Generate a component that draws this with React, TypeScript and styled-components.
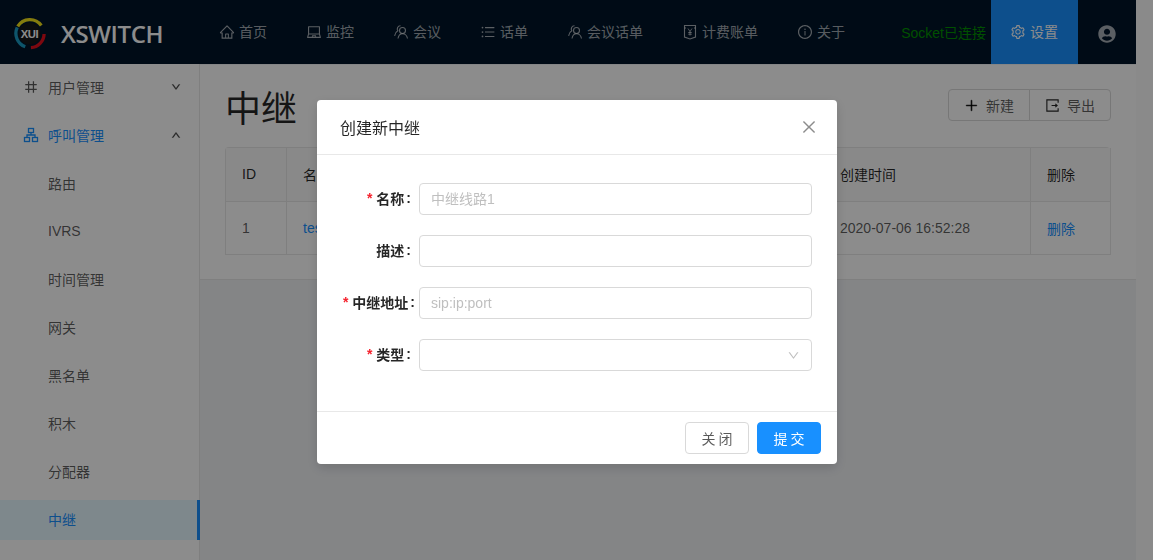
import React from "react";
import styled, { createGlobalStyle } from "styled-components";
import {
  AiOutlineClose,
  AiOutlineDown,
  AiOutlineHome,
  AiOutlineInfoCircle,
  AiOutlineLaptop,
  AiOutlineNumber,
  AiOutlinePlus,
  AiOutlineSetting,
  AiOutlineUnorderedList,
  AiOutlineUp,
} from "react-icons/ai";
import { FaUserCircle } from "react-icons/fa";

const GlobalStyle = createGlobalStyle`
  html, body {
    margin: 0;
    height: 100%;
    overflow: hidden;
    font-family: "Liberation Sans", "Noto Sans CJK SC", sans-serif;
    font-size: 14px;
    color: rgba(0, 0, 0, 0.65);
  }
  * { box-sizing: border-box; }
`;

const Shell = styled.div`
  display: flex;
  height: 560px;
`;

const Page = styled.div`
  width: 1136px;
  display: flex;
  flex-direction: column;
`;

const ScrollTrack = styled.div`
  flex: 1;
  background: #fbfbfb;
`;

const Header = styled.header`
  height: 64px;
  flex-shrink: 0;
  display: flex;
  align-items: stretch;
  background: #001529;
`;

const Brand = styled.div`
  width: 200px;
  display: flex;
  align-items: center;
  padding: 2px 0 0 13px;
  gap: 15px;
  color: #fff;
  font-family: "Open Sans", sans-serif;
  font-size: 24px;
  font-weight: 600;
  letter-spacing: -0.4px;
`;

const NavItem = styled.div`
  display: flex;
  align-items: center;
  gap: 5px;
  padding: 0 20px;
  white-space: nowrap;
  color: rgba(255, 255, 255, 0.65);
  line-height: 1;
  svg { font-size: 16px; margin: -1px -1px 0; }
`;

const SocketStatus = styled.div`
  margin-left: auto;
  margin-right: 5px;
  display: flex;
  align-items: center;
  color: #009000;
`;

const SettingsItem = styled(NavItem)`
  width: 87px;
  background: #1890ff;
  color: #fff;
`;

const Avatar = styled.div`
  width: 58px;
  display: flex;
  align-items: center;
  padding: 3px 0 0 20px;
  color: rgba(255, 255, 255, 0.65);
  font-size: 18px;
`;

const Body = styled.div`
  flex: 1;
  display: flex;
  min-height: 0;
`;

const Sidebar = styled.aside`
  width: 200px;
  flex-shrink: 0;
  padding-top: 4px;
  background: #fff;
  border-right: 1px solid #e8e8e8;
`;

const MenuItem = styled.div<{ $active?: boolean; $open?: boolean }>`
  height: 40px;
  margin-bottom: 8px;
  margin-right: -1px;
  padding: 0 19px 3px ${(p) => (p.$open ? "24px" : "48px")};
  display: flex;
  align-items: center;
  color: ${(p) => (p.$active ? "#1890ff" : "rgba(0, 0, 0, 0.65)")};
  background: ${(p) => (p.$active ? "#e6f7ff" : "transparent")};
  border-right: ${(p) => (p.$active ? "3px solid #1890ff" : "0")};
`;

const SubmenuRow = styled(MenuItem)<{ $blue?: boolean }>`
  color: ${(p) => (p.$blue ? "#1890ff" : "rgba(0, 0, 0, 0.65)")};
  gap: 9px;
  > svg:first-child { font-size: 16px; margin-left: -1px; }
`;

const Caret = styled.span`
  margin-left: auto;
  display: flex;
  font-size: 10px;
  color: rgba(0, 0, 0, 0.65);
  svg { stroke: currentColor; stroke-width: 60; }
`;

const Content = styled.main`
  flex: 1;
  background: #f0f2f5;
`;

const Card = styled.section`
  margin-top: 1px;
  height: 215px;
  padding: 15px 25px 0;
  background: #fff;
  border-bottom: 1px solid #e8e8e8;
`;

const TitleRow = styled.div`
  display: flex;
  justify-content: space-between;
  align-items: flex-start;
  height: 67px;
`;

const Title = styled.h1`
  margin: 0;
  font-size: 36px;
  font-weight: 400;
  line-height: 60px;
  color: rgba(0, 0, 0, 0.85);
`;

const ButtonGroup = styled.div`
  display: flex;
  margin-top: 9px;
`;

const GroupButton = styled.button`
  height: 32px;
  width: 82px;
  display: flex;
  align-items: center;
  justify-content: center;
  gap: 7px;
  font: inherit;
  color: rgba(0, 0, 0, 0.65);
  background: #fff;
  border: 1px solid #d9d9d9;
  padding: 0;
  &:first-child { border-radius: 4px 0 0 4px; }
  &:last-child { border-radius: 0 4px 4px 0; margin-left: -1px; }
  svg { font-size: 15px; color: rgba(0, 0, 0, 0.85); stroke: currentColor; stroke-width: 30; }
`;

const Table = styled.div`
  display: grid;
  grid-template-columns: 61px 537px 207px 80px;
  width: 885px;
  border-top: 1px solid #e8e8e8;
  border-left: 1px solid #e8e8e8;
  border-radius: 4px 4px 0 0;
`;

const Cell = styled.div<{ $head?: boolean; $link?: boolean }>`
  height: 53.5px;
  padding: 0 16px ${(p) => (p.$head ? "1px" : "0")};
  display: flex;
  align-items: center;
  border-right: 1px solid #e8e8e8;
  border-bottom: 1px solid #e8e8e8;
  background: ${(p) => (p.$head ? "#fafafa" : "#fff")};
  color: ${(p) =>
    p.$link ? "#1890ff" : p.$head ? "rgba(0, 0, 0, 0.85)" : "rgba(0, 0, 0, 0.65)"};
`;

const Mask = styled.div`
  position: fixed;
  inset: 0;
  background: rgba(0, 0, 0, 0.45);
`;

const Modal = styled.div`
  position: fixed;
  left: 317px;
  top: 100px;
  width: 520px;
  height: 364px;
  display: flex;
  flex-direction: column;
  background: #fff;
  border-radius: 4px;
  box-shadow: 0 4px 12px rgba(0, 0, 0, 0.15);
`;

const ModalHead = styled.div`
  height: 55px;
  flex-shrink: 0;
  padding: 0 19px 1px 23px;
  display: flex;
  align-items: center;
  justify-content: space-between;
  border-bottom: 1px solid #e8e8e8;
  font-size: 16px;
  color: rgba(0, 0, 0, 0.85);
  svg { font-size: 18px; color: rgba(0, 0, 0, 0.45); }
`;

const ModalForm = styled.div`
  flex: 1;
  padding: 28px 25px 0 24px;
  display: flex;
  flex-direction: column;
  gap: 20px;
`;

const FormRow = styled.div`
  display: flex;
  align-items: center;
  height: 32px;
`;

const Label = styled.label<{ $wide?: boolean }>`
  width: 78px;
  flex-shrink: 0;
  padding: 0 ${(p) => (p.$wide ? "4px" : "8px")} 3px 0;
  display: flex;
  justify-content: flex-end;
  align-items: center;
  white-space: nowrap;
  font-size: 14px;
  font-weight: 700;
  color: rgba(0, 0, 0, 0.85);
`;

const Colon = styled.span`
  margin-left: 2px;
`;

const Star = styled.span`
  margin-right: 4px;
  color: #f5222d;
  font-size: 14px;
  font-weight: 700;
`;

const Input = styled.input`
  flex: 1;
  min-width: 0;
  height: 32px;
  padding: 0 11px;
  font: inherit;
  color: rgba(0, 0, 0, 0.65);
  border: 1px solid #d9d9d9;
  border-radius: 4px;
  outline: none;
  &::placeholder { color: #bfbfbf; opacity: 1; }
`;

const SelectBox = styled.div`
  flex: 1;
  height: 32px;
  padding: 0 11px;
  display: flex;
  align-items: center;
  justify-content: flex-end;
  border: 1px solid #d9d9d9;
  border-radius: 4px;
  font-size: 13px;
  color: #bfbfbf;
`;

const ModalFoot = styled.div`
  height: 53px;
  flex-shrink: 0;
  padding: 0 16px;
  display: flex;
  align-items: center;
  justify-content: flex-end;
  gap: 8px;
  border-top: 1px solid #e8e8e8;
`;

const FootButton = styled.button<{ $primary?: boolean }>`
  width: 64px;
  height: 32px;
  padding: 0;
  font: inherit;
  letter-spacing: 3px;
  text-indent: 3px;
  border-radius: 4px;
  border: 1px solid ${(p) => (p.$primary ? "#1890ff" : "#d9d9d9")};
  background: ${(p) => (p.$primary ? "#1890ff" : "#fff")};
  color: ${(p) => (p.$primary ? "#fff" : "rgba(0, 0, 0, 0.65)")};
`;

const Logo = () => (
  <svg width="33" height="33" viewBox="0 0 35 35">
    <circle cx="17.5" cy="17.5" r="11.5" fill="#14161a" />
    <path d="M5 10 A15 15 0 0 1 30 9" fill="none" stroke="#f2e21a" strokeWidth="3.5" />
    <path d="M33 18 A15 15 0 0 1 19 32.5" fill="none" stroke="#e3101d" strokeWidth="3.5" />
    <path d="M4.5 11 A15 15 0 0 0 13 31.5" fill="none" stroke="#1b9cc4" strokeWidth="3.5" />
    <text x="17.5" y="22" textAnchor="middle" fontSize="12" fontWeight="700" fill="#fff" fontFamily="Liberation Sans, sans-serif">
      XUI
    </text>
  </svg>
);

// the two overlapping heads of 会议 / 会议话单
const PeopleIcon = () => (
  <svg width="1em" height="1em" viewBox="0 0 16 16" fill="none" stroke="currentColor" strokeWidth="1.1">
    <circle cx="9.5" cy="6.5" r="3" />
    <path d="M5 14.5 C5.5 11.5 7.5 9.8 9.5 9.8 C11.5 9.8 14 11.5 14.5 14.5" />
    <path d="M7.5 1.8 A3.2 3.2 0 0 0 4.8 6.8 C3 7.8 2 9.5 1.6 11.8" />
  </svg>
);

// the ¥ ledger with the notched foot of 计费账单
const LedgerIcon = () => (
  <svg width="1em" height="1em" viewBox="0 0 16 16" fill="none" stroke="currentColor" strokeWidth="1.1">
    <path d="M2.5 1.5 H13.5 V13 L8 15 L2.5 13 Z" />
    <path d="M2.5 4 H4 M12 4 H13.5" />
    <path d="M6 4.5 L8 7.5 L10 4.5 M8 7.5 V11.5 M6.2 8.5 H9.8 M6.2 10.2 H9.8" strokeWidth="0.9" />
  </svg>
);

// box open at the right with a small arrow, 导出
const ExportIcon = () => (
  <svg width="1em" height="1em" viewBox="0 0 16 16" fill="none" stroke="currentColor">
    <path d="M14 5 V2 H2 V14 H14 V11" strokeWidth="1.2" />
    <path d="M7 8 H13 M11 6.2 L13 8 L11 9.8" strokeWidth="1.1" />
  </svg>
);

// org chart of 呼叫管理
const ClusterIcon = () => (
  <svg width="1em" height="1em" viewBox="0 0 16 16" fill="none" stroke="currentColor" strokeWidth="1.3">
    <rect x="5.5" y="1.5" width="5" height="4" />
    <rect x="1.5" y="10.5" width="5" height="4" />
    <rect x="9.5" y="10.5" width="5" height="4" />
    <path d="M8 5.5 V8 M4 10.5 V8 H12 V10.5" />
  </svg>
);

const navItems = [
  { icon: <AiOutlineHome />, label: "首页" },
  { icon: <AiOutlineLaptop />, label: "监控" },
  { icon: <PeopleIcon />, label: "会议" },
  { icon: <AiOutlineUnorderedList />, label: "话单" },
  { icon: <PeopleIcon />, label: "会议话单" },
  { icon: <LedgerIcon />, label: "计费账单" },
  { icon: <AiOutlineInfoCircle />, label: "关于" },
];

const subItems = ["路由", "IVRS", "时间管理", "网关", "黑名单", "积木", "分配器"];

export default function App() {
  return (
    <>
      <GlobalStyle />
      <Shell>
        <Page>
          <Header>
            <Brand>
              <Logo />
              XSWITCH
            </Brand>
            {navItems.map((item) => (
              <NavItem key={item.label}>
                {item.icon}
                {item.label}
              </NavItem>
            ))}
            <SocketStatus>Socket已连接</SocketStatus>
            <SettingsItem>
              <AiOutlineSetting />
              设置
            </SettingsItem>
            <Avatar>
              <FaUserCircle />
            </Avatar>
          </Header>
          <Body>
            <Sidebar>
              <SubmenuRow $open>
                <AiOutlineNumber />
                用户管理
                <Caret>
                  <AiOutlineDown />
                </Caret>
              </SubmenuRow>
              <SubmenuRow $open $blue>
                <ClusterIcon />
                呼叫管理
                <Caret>
                  <AiOutlineUp />
                </Caret>
              </SubmenuRow>
              {subItems.map((label) => (
                <MenuItem key={label}>{label}</MenuItem>
              ))}
              <MenuItem $active>中继</MenuItem>
            </Sidebar>
            <Content>
              <Card>
                <TitleRow>
                  <Title>中继</Title>
                  <ButtonGroup>
                    <GroupButton>
                      <AiOutlinePlus />
                      新建
                    </GroupButton>
                    <GroupButton>
                      <ExportIcon />
                      导出
                    </GroupButton>
                  </ButtonGroup>
                </TitleRow>
                <Table>
                  <Cell $head>ID</Cell>
                  <Cell $head>名称</Cell>
                  <Cell $head>创建时间</Cell>
                  <Cell $head>删除</Cell>
                  <Cell>1</Cell>
                  <Cell $link>test</Cell>
                  <Cell>2020-07-06 16:52:28</Cell>
                  <Cell $link>删除</Cell>
                </Table>
              </Card>
            </Content>
          </Body>
        </Page>
        <ScrollTrack />
      </Shell>
      <Mask />
      <Modal>
        <ModalHead>
          创建新中继
          <AiOutlineClose />
        </ModalHead>
        <ModalForm>
          <FormRow>
            <Label>
              <Star>*</Star>名称<Colon>:</Colon>
            </Label>
            <Input placeholder="中继线路1" />
          </FormRow>
          <FormRow>
            <Label>
              描述<Colon>:</Colon>
            </Label>
            <Input />
          </FormRow>
          <FormRow>
            <Label $wide>
              <Star>*</Star>中继地址<Colon>:</Colon>
            </Label>
            <Input placeholder="sip:ip:port" />
          </FormRow>
          <FormRow>
            <Label>
              <Star>*</Star>类型<Colon>:</Colon>
            </Label>
            <SelectBox>
              <AiOutlineDown />
            </SelectBox>
          </FormRow>
        </ModalForm>
        <ModalFoot>
          <FootButton>关闭</FootButton>
          <FootButton $primary>提交</FootButton>
        </ModalFoot>
      </Modal>
    </>
  );
}
